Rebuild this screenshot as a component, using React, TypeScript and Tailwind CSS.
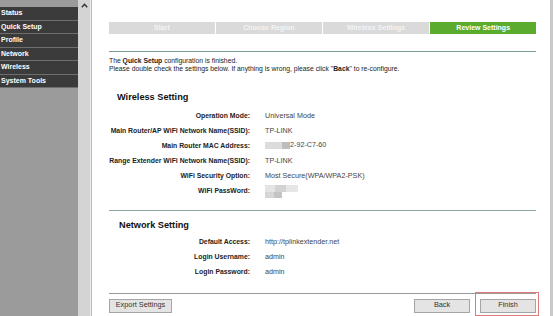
import React from "react";

const menu = ["Status", "Quick Setup", "Profile", "Network", "Wireless", "System Tools"];
const steps = ["Start", "Choose Region", "Wireless Settings", "Review Settings"];

const Row = ({ label, children }: { label: string; children: React.ReactNode }) => (
  <div className="flex h-[15px] items-center">
    <div className="w-[141px] shrink-0 text-right font-bold text-[6.85px] text-[#222]">{label}</div>
    <div className="pl-[15px] text-[7.2px] text-[#444]">{children}</div>
  </div>
);

export default function App() {
  return (
    <div
      className="flex h-[316px] w-[553px] overflow-hidden bg-white"
      style={{ fontFamily: '"Liberation Sans", Arial, sans-serif' }}
    >
      {/* sidebar */}
      <div className="w-[78px] shrink-0 bg-[#9b9b9b] pt-[7px]">
        {menu.map((m) => (
          <div
            key={m}
            className="flex h-[13.5px] items-center border-b border-[#6e6e6e] bg-[#3b3b3b] pl-[1px] text-[7px] font-bold text-white"
          >
            {m}
          </div>
        ))}
      </div>

      {/* scrollbar */}
      <div className="relative w-[12px] shrink-0 bg-[#d4d4d4]">
        <svg className="absolute left-[3px] top-[3px]" width="7" height="5" viewBox="0 0 7 5">
          <path d="M0.8 4.2 L3.5 1.2 L6.2 4.2" fill="none" stroke="#333" strokeWidth="1.4" />
        </svg>
      </div>
      <div className="w-[1px] shrink-0 bg-[#ececec]" />
      <div className="w-[1px] shrink-0 bg-[#b9b9b9]" />

      {/* main */}
      <div className="flex-1 border-r-[3px] border-[#c9c9c9] pl-[17px] pr-[14px]">
        <div className="mt-[22px] flex h-[12px] gap-[1.5px]">
          {steps.map((s, i) => (
            <div
              key={s}
              className={`flex flex-1 items-center justify-center text-[7px] font-bold ${
                i === 3 ? "bg-[#5bab2c] text-white" : "bg-[#dadada] text-[#f4f4f4]"
              }`}
            >
              {s}
            </div>
          ))}
        </div>

        <div className="mt-[17px] h-[1px] bg-[#7c9e8f]" />

        <div className="mt-[5px] text-[6.8px] leading-[8px] text-[#222]">
          <div>
            The <b>Quick Setup</b> configuration is finished.
          </div>
          <div className="whitespace-nowrap">
            Please double check the settings below. If anything is wrong, please click "<b>Back</b>" to re-configure.
          </div>
        </div>

        <div className="mt-[18px] pl-[8px] text-[9.2px] font-bold text-[#111]">Wireless Setting</div>

        <div className="mt-[4px]">
          <Row label="Operation Mode:">Universal Mode</Row>
          <Row label="Main Router/AP WiFi Network Name(SSID):">TP-LINK</Row>
          <Row label="Main Router MAC Address:">
            <span className="inline-flex items-center">
              <span className="inline-block h-[7px] w-[17px] bg-[#dcdcdc]" />
              <span className="inline-block h-[7px] w-[8px] bg-[#bdbdbd]" />
              <span>2-92-C7-60</span>
            </span>
          </Row>
          <Row label="Range Extender WiFi Network Name(SSID):">TP-LINK</Row>
          <Row label="WiFi Security Option:">Most Secure(WPA/WPA2-PSK)</Row>
          <div className="flex h-[15px] items-center">
            <div className="w-[141px] shrink-0 text-right font-bold text-[6.85px] text-[#222]">WiFi PassWord:</div>
            <div className="pl-[15px]">
              <div className="flex">
                <span className="h-[7px] w-[10px] bg-[#e4e4e4]" />
                <span className="h-[7px] w-[11px] bg-[#d2d2d2]" />
                <span className="h-[7px] w-[12px] bg-[#e6e6e6]" />
              </div>
              <div className="flex">
                <span className="h-[6px] w-[9px] bg-[#d6d6d6]" />
                <span className="h-[6px] w-[8px] bg-[#c4c4c4]" />
              </div>
            </div>
          </div>
        </div>

        <div className="mt-[11px] h-[1px] bg-[#8fa89c]" />

        <div className="mt-[8px] pl-[10px] text-[9.2px] font-bold text-[#111]">Network Setting</div>

        <div className="mt-[2px]">
          <Row label="Default Access:">http://tplinkextender.net</Row>
          <Row label="Login Username:">admin</Row>
          <Row label="Login Password:">admin</Row>
        </div>

        <div className="mt-[13px] h-[1.5px] bg-[#9a9a9a]" />

        <div className="mt-[4.5px] flex items-center">
          <button className="flex h-[14px] w-[63px] items-center justify-center border border-[#a5a5a5] bg-[#e4e4e4] text-[7.3px] text-[#333]">
            Export Settings
          </button>
          <div className="flex-1" />
          <button className="flex h-[14px] w-[56px] items-center justify-center border border-[#a5a5a5] bg-[#e4e4e4] text-[7.3px] text-[#333]">
            Back
          </button>
          <div className="relative ml-[10px] flex">
            <div className="absolute -left-[5px] -top-[7px] h-[24px] w-[64px] border border-[#e07a7a]" />
            <button className="flex h-[14px] w-[56px] items-center justify-center border border-[#a5a5a5] bg-[#e4e4e4] text-[7.3px] text-[#333]">
              Finish
            </button>
          </div>
        </div>
      </div>
    </div>
  );
}
